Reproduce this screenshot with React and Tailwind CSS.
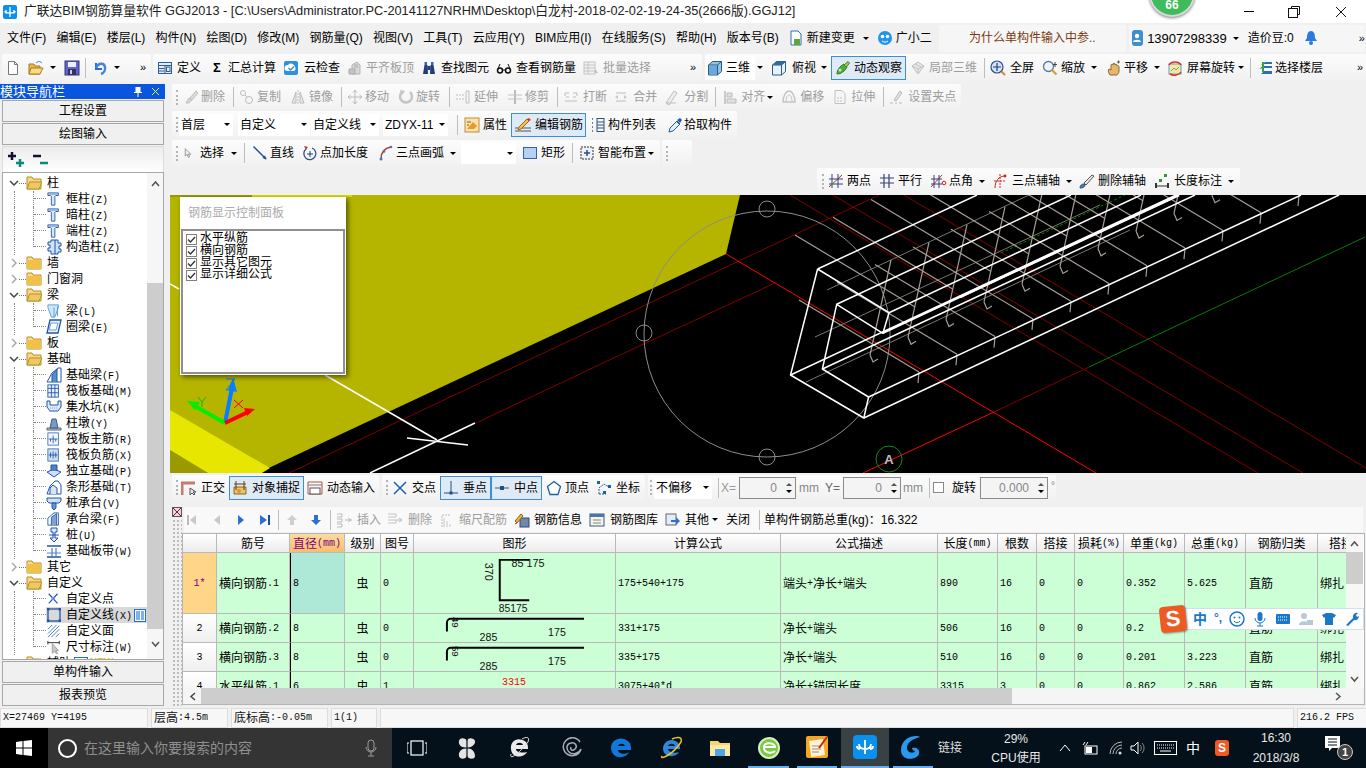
import React from "react";

const CJK = "[font-family:'Liberation_Sans','Noto_Sans_CJK_SC',sans-serif]";

const S = ({ children, w = 16, h = 16, vb = "0 0 16 16", cls = "" }) => (
  <svg width={w} height={h} viewBox={vb} className={"shrink-0 block " + cls}>{children}</svg>
);

/* toolbar icons */
const Ic = {
  doc: <S><path d="M3.5 1.5h6l3 3v10h-9z" fill="#fff" stroke="#777" /><path d="M9.5 1.5v3h3" fill="none" stroke="#777" /></S>,
  open: <S><path d="M1 4h5l1 2h5v8H1z" fill="#e8b93e" stroke="#a87b1c" /><path d="M3 8h12l-3 6H1z" fill="#f7dc85" stroke="#a87b1c" /><path d="M8 3c2-2 4-2 6 0" fill="none" stroke="#3a7bc8" /></S>,
  save: <S><rect x="1" y="1" width="14" height="14" fill="#6264c8" stroke="#33347c" /><rect x="4" y="2" width="8" height="5" fill="#eef" /><rect x="4" y="9" width="8" height="6" fill="#2f2f66" /><rect x="6" y="10" width="2" height="4" fill="#ccd" /></S>,
  undo: <S><path d="M3 3v6h6" fill="none" stroke="#2d6ec4" strokeWidth="2" /><path d="M3 8c2-5 8-6 9-1 .6 3-1 6-4 7" fill="none" stroke="#3f85da" strokeWidth="2.5" /></S>,
  define: <S><rect x="1.5" y="2.5" width="13" height="11" fill="#e4eefa" stroke="#2f5f9a" /><path d="M1.5 5.5h13M1.5 8.5h6M1.5 11h6M8 5.5v8" stroke="#2f5f9a" /><rect x="9.5" y="7" width="3.5" height="4.5" fill="none" stroke="#2f5f9a" /></S>,
  cloud: <S><rect x="1" y="1" width="14" height="14" rx="2" fill="#2f8fe0" /><path d="M4 11a3 3 0 0 1 1-6 4 4 0 0 1 7 2 2.5 2.5 0 0 1-1 4z" fill="#fff" /><path d="M5.5 8l2 2 3.5-3.5" fill="none" stroke="#2f8fe0" strokeWidth="1.4" /></S>,
  level: <S><path d="M5 14V5l5-3 3 3v9z" fill="#d8d8d8" stroke="#b4b4b4" /><path d="M2 9h6v5H2z" fill="#c4c4c4" stroke="#aaa" /><path d="M7 5h4M7 7h4" stroke="#aaa" /></S>,
  bino: <S><path d="M2 14l1.500-9h3l.5 9zM9 14l.5-9h3l1.500 9z" fill="#1e3f78" /><rect x="6.500" y="6" width="3" height="4" fill="#1e3f78" /><rect x="3.500" y="2" width="2.500" height="3" fill="#3a65a8" /><rect x="10" y="2" width="2.500" height="3" fill="#3a65a8" /></S>,
  glass: <S><circle cx="4" cy="10.500" r="2.500" fill="none" stroke="#111" strokeWidth="1.500" /><circle cx="12" cy="10.500" r="2.500" fill="none" stroke="#111" strokeWidth="1.500" /><path d="M6.500 10h3M1.500 10L4 4M14.500 10L12 4" stroke="#111" fill="none" /></S>,
  batch: <S><rect x="1" y="2" width="11" height="12" fill="#f2f2f2" stroke="#c4c4c4" /><path d="M1 5h11M1 8h11M1 11h11M5 2v12" stroke="#c4c4c4" /><path d="M12 9l3 4h-3z" fill="#bbb" /></S>,
  cube: <S><path d="M1.500 5l4-3.500h9v10l-4 3.500h-9z" fill="#8fc4ea" stroke="#2d5b86" /><path d="M1.500 5h9v10M10.500 5l4-3.500" fill="none" stroke="#2d5b86" /><path d="M2 5.500h8v9H2z" fill="#6aa9db" /></S>,
  top: <S><path d="M1.500 5l4-3.500h9v10l-4 3.500h-9z" fill="#e8f1f8" stroke="#2d5b86" /><path d="M1.500 5h9v10M10.500 5l4-3.500" fill="none" stroke="#2d5b86" /><path d="M1.500 5l4-3.500h9l-4 3.500z" fill="#2f6aa6" /></S>,
  orbit: <S><path d="M2 14c0-4 3-8 7-10l3 3c-2 4-6 7-10 7z" fill="#4cae3c" stroke="#2d7a22" /><path d="M9 5l4-3.500 1.500 1.500-3 4z" fill="#9ad24a" stroke="#587a22" /><circle cx="5" cy="10" r="1.500" fill="#cfeab0" /></S>,
  local: <S><path d="M2 6l6-4 6 4-6 8z" fill="#e8e8e8" stroke="#c0c0c0" /><path d="M2 6l6 3 6-3M8 9v5M5 4l6 3" fill="none" stroke="#c0c0c0" /></S>,
  full: <S><circle cx="7" cy="7" r="6" fill="#d4e4f6" stroke="#2a4f8c" strokeWidth="1.200" /><path d="M7 3v8M3 7h8" stroke="#1f3f80" strokeWidth="1.200" /><path d="M11.500 11.500L15 15" stroke="#d88a1a" strokeWidth="2" /></S>,
  zoom: <S><circle cx="6.500" cy="6.500" r="5" fill="#eef4fa" stroke="#5b7a9a" strokeWidth="1.300" /><path d="M10 10l4.500 4.500" stroke="#d8a12a" strokeWidth="2.200" /><path d="M13 2v5M11 4.500h4" stroke="#444" /></S>,
  pan: <S><path d="M4 15c-2-3-2-5-1-6l2 1V5c0-1 2-1 2 0V4c0-1 2-1 2 0v1c0-1 2-1 2 0v1c1-1 2 0 2 1v4c0 2-1 3-2 4z" fill="#e2b870" stroke="#8c6a2c" /><path d="M11 2h3M12.500 .5v3" stroke="#555" /></S>,
  rot: <S><rect x="2" y="4" width="12" height="10" fill="#f4e8a8" stroke="#6a9abf" /><path d="M4 11l3-3 2 2 3-3" fill="none" stroke="#69b04a" /><path d="M2 5a6.500 5 0 0 1 12 0M14 12a7 5 0 0 1-11 2" fill="none" stroke="#e03020" strokeWidth="1.500" /></S>,
  floors: <S><path d="M3 5l4-3h7v2H7L3 5zM1 9l4-3h9v2H5zM3 14l3-3h8v3z" fill="#2f6fb0" /><path d="M4 2h2v10H4z" fill="#37a33f" /></S>,
  del: <S><path d="M2 14l3-5 3 2-3 3z" fill="#d6d6d6" stroke="#c0c0c0" /><path d="M6 9l6-7 2 2-6 7z" fill="#dcdcdc" stroke="#bdbdbd" /></S>,
  copy: <S><circle cx="5" cy="4" r="2.500" fill="none" stroke="#bdbdbd" /><circle cx="11" cy="11" r="3.500" fill="none" stroke="#bdbdbd" /><path d="M7 6l2 2" stroke="#bdbdbd" /></S>,
  mirror: <S><path d="M6 3L2 14h4zM10 3l4 11h-4z" fill="#e6e6e6" stroke="#bcbcbc" /><path d="M8 1v14" stroke="#bcbcbc" strokeDasharray="2 1" /></S>,
  move: <S><path d="M8 1v14M1 8h14M8 1L6 3.500M8 1l2 2.500M8 15l-2-2.500M8 15l2-2.500M1 8l2.500-2M1 8l2.500 2M15 8l-2.500-2M15 8l-2.500 2" fill="none" stroke="#bcbcbc" /></S>,
  rotate: <S><path d="M4 3a6 6 0 1 0 8 0" fill="none" stroke="#c4c4c4" strokeWidth="2.500" /><path d="M2 1l5 1-3 4z" fill="#c4c4c4" /></S>,
  extend: <S><path d="M1 6h8M1 10h8" stroke="#c0c0c0" strokeDasharray="2 1" /><path d="M11 2v12h3V2z" fill="#f4f4f4" stroke="#c0c0c0" /></S>,
  trim: <S><path d="M8 1v14" stroke="#bbb" strokeWidth="2" /><path d="M1 6h14M1 10h14" stroke="#c4c4c4" /></S>,
  brk: <S><path d="M2 4h4M10 4h4M2 12h12M2 4v3M14 4v3" stroke="#bdbdbd" fill="none" /><path d="M6 8H3M10 8h3" stroke="#bdbdbd" /></S>,
  merge: <S><path d="M3 4h10M3 12h10" stroke="#bdbdbd" /><path d="M2 8l3-2v4zM14 8l-3-2v4z" fill="#c8c8c8" /></S>,
  split: <S><path d="M2 14l8-12 3 2-8 12zM12 14H2" fill="#eee" stroke="#bdbdbd" /></S>,
  align: <S><path d="M2 2v13" stroke="#bbb" strokeWidth="1.500" /><path d="M4 4h5v4H4zM4 10h9v4H4z" fill="#e0e0e0" stroke="#bbb" /></S>,
  offset: <S><path d="M2 13c0-6 3-11 6-11s6 5 6 11z" fill="none" stroke="#c4c4c4" strokeWidth="1.500" /><path d="M5 13c0-4 1-7 3-7s3 3 3 7" fill="none" stroke="#c4c4c4" /></S>,
  stretch: <S><path d="M3 1.500h7l3 3v10H3z" fill="#f6f6f6" stroke="#c0c0c0" /><path d="M5 9h6M5 12h6" stroke="#c0c0c0" strokeDasharray="2 1" /></S>,
  grip: <S><path d="M2 14h3M7 14h2M11 14h3" stroke="#bbb" /><path d="M6 11l6-9 2 2-6 8z" fill="#e0e0e0" stroke="#bbb" /></S>,
  attr: <S><rect x="1" y="1" width="14" height="14" fill="#f8e2b0" stroke="#c98a2e" /><path d="M3 12l6-7 4 4-3 3z" fill="#e59a2b" /><path d="M3 5h4M3 8h2" stroke="#8a5a14" /></S>,
  edit: <S w={18} vb="0 0 18 16"><path d="M1 11h16M1 14h16" stroke="#555" /><path d="M5 10l8-8 2 2-8 8-3 1z" fill="#f3c04c" stroke="#9a6a16" /><path d="M13 2l2-1 2 2-2 1z" fill="#d4352a" /></S>,
  list: <S><path d="M2 2h2M2 6h2M2 10h2M2 14h2" stroke="#3a5a80" strokeWidth="1.500" strokeDasharray="1 1" /><rect x="7" y="1.500" width="7" height="13" fill="#f4f8fc" stroke="#33526f" /><path d="M7 5h7M7 8h7M7 11h7" stroke="#33526f" /></S>,
  pick: <S><path d="M2 15l1-4 7-7 3 3-7 7z" fill="#dff0fb" stroke="#295b91" /><path d="M10 3l3-2 2 2-2 3z" fill="#1f5fae" /><path d="M9 4l3 3" stroke="#295b91" /></S>,
  sel: <S w={10}><path d="M2 1v12l3-3 2 5 2-1-2-4h4z" fill="#eef0f5" stroke="#6a6a74" /></S>,
  line: <S><path d="M1.500 1.500L14 14" stroke="#1f4f88" strokeWidth="1.500" /><path d="M14.500 14.500l-4-1.500 2.500-2.500z" fill="#1f4f88" /></S>,
  ptlen: <S><path d="M10 3a6 6 0 1 1-6 1" fill="none" stroke="#2a4f8c" strokeWidth="1.300" /><path d="M8 6v6M5 9h6" stroke="#1f3f70" /><path d="M2 1l4 1-2 3z" fill="#c23a2a" /></S>,
  arc: <S><path d="M3 14C3 7 7 3 13 2" fill="none" stroke="#b83a2a" strokeWidth="1.500" /><circle cx="3" cy="14" r="1.500" fill="#3a7ac8" /><circle cx="6" cy="6.500" r="1.300" fill="#3a7ac8" /><circle cx="13" cy="2" r="1.300" fill="#3a7ac8" /></S>,
  rect: <S><rect x="1.500" y="2.500" width="13" height="11" fill="#b5d0f2" stroke="#3162ac" /></S>,
  smart: <S><rect x="2" y="2" width="12" height="12" fill="#eef2f8" stroke="#333" strokeDasharray="2 1" /><path d="M8 5v6M5 8h6" stroke="#2a4f8c" strokeWidth="1.500" /></S>,
  two: <S><path d="M1 14L14 2" stroke="#c8241c" /><path d="M4 1v14M10 1v14M1 6h14M1 11h14" stroke="#33427c" /><circle cx="4" cy="11" r="1.300" fill="#2e9c3a" /></S>,
  para: <S><path d="M5 1v14M10 1v14M1 5h14M1 10h14" stroke="#33427c" strokeWidth="1.200" /></S>,
  angle: <S w={17} vb="0 0 17 16"><path d="M1 14L12 2" stroke="#c8241c" /><path d="M4 2v13M9 2v13M1 6h11M1 11h11" stroke="#33427c" /><circle cx="14" cy="10" r="1.800" fill="none" stroke="#c8241c" /></S>,
  arcAx: <S><path d="M3 15C3 8 7 3 13 3" fill="none" stroke="#c8241c" /><path d="M8 1v14M2 8h12" stroke="#c8241c" strokeDasharray="2 1" /><circle cx="13" cy="3" r="1.400" fill="#c8241c" /></S>,
  brush: <S><path d="M1 15c0-3 2-4 4-4l1 1c0 2-2 3-5 3z" fill="#4a7ab0" stroke="#2f5280" /><path d="M5 10l8-8 2 1-8 9z" fill="#e9e9e9" stroke="#555" /></S>,
  dim: <S><rect x="1" y="10" width="2" height="5" fill="#333" /><rect x="13" y="10" width="2" height="5" fill="#333" /><path d="M2 13h12" stroke="#333" /><rect x="10" y="1" width="3" height="3" fill="#2a9a3c" /><rect x="5" y="6" width="3" height="3" fill="#2a9a3c" /></S>,
  ortho: <S><path d="M1 15V3h13" fill="none" stroke="#c77a70" strokeWidth="3" /><path d="M9 8v7l2-2 2 2 1-1-2-2h3z" fill="#e8e8f0" stroke="#555" /></S>,
  snap: <S><path d="M2 7h12v7H2z" fill="#e8c472" stroke="#8a6416" /><path d="M4 1v9M12 1v9M2 4h12" stroke="#6a3a12" /><circle cx="7" cy="11" r="2" fill="#d89a2c" /></S>,
  dyn: <S><path d="M1 2h14M1 14h14M1 2v12M15 2v12" stroke="#b5544a" fill="none" /><rect x="3" y="8" width="10" height="6" fill="#fff" stroke="#555" /><path d="M1 5h14" stroke="#777" /></S>,
  cross: <S><path d="M2 2l12 12M14 2L2 14" stroke="#1f5fae" strokeWidth="1.500" /></S>,
  perp: <S><path d="M1 13h14" stroke="#1f4f88" /><path d="M8 1v12" stroke="#1f4f88" /><rect x="6.500" y="11.500" width="3" height="3" fill="#1f4f88" /></S>,
  mid: <S><path d="M1 8h14" stroke="#555" /><rect x="6" y="6" width="4" height="4" fill="#1f4f88" /></S>,
  vertex: <S><path d="M8 1.500l6.500 5-2.500 8H4l-2.500-8z" fill="#fff" stroke="#1f5fae" strokeWidth="1.300" /></S>,
  coord: <S><path d="M3 14V8l5-4 5 3M3 14h7" fill="none" stroke="#1f5fae" strokeDasharray="2 1" /><rect x="1" y="1" width="3" height="3" fill="#1f5fae" /><rect x="12" y="5" width="3" height="3" fill="#1f5fae" /><rect x="7" y="11" width="3" height="3" fill="#1f5fae" /></S>,
  ins: <S w={17} vb="0 0 17 16"><path d="M1 2h5v3H1M1 7h5v3H1M1 12h5v3H1" fill="none" stroke="#bbb" /><path d="M9 8h7M12 6l3 2-3 2" fill="none" stroke="#bbb" /></S>,
  rem: <S><path d="M1 2h8v3H1M1 8h8v3H1" fill="none" stroke="#c4c4c4" /><path d="M9 8h6M12 6l3 2-3 2" fill="none" stroke="#bbb" /></S>,
  scale: <S w={12} vb="0 0 12 16"><path d="M1 15V3M1 3h9" fill="none" stroke="#bbb" strokeDasharray="2 1" /><path d="M3 15V6M6 15V9M9 15v-3" stroke="#c6c6c6" /></S>,
  info: <S><rect x="6" y="6" width="9" height="9" fill="#6e89ac" stroke="#2e4b70" /><path d="M1 9l6-7 2 2-6 7z" fill="#e9b64a" stroke="#8a6416" /><path d="M1 12l2-1" stroke="#d23" /></S>,
  lib: <S><rect x="1" y="2" width="14" height="12" fill="#f4f4ea" stroke="#3a5a80" /><rect x="1" y="2" width="14" height="3" fill="#4d76a8" /><path d="M4 8h8M4 11h8" stroke="#8a8a6c" /></S>,
  other: <S><rect x="1" y="2" width="10" height="11" fill="#e4ecf6" stroke="#667" /><path d="M6 8h5V5l4 4-4 4v-3H6z" fill="#2f6fd0" /></S>,
};

const Arrow = ({ cls = "" }) => (
  <span className={"block w-0 h-0 shrink-0 border-x-[3px] border-x-transparent border-t-[3px] border-t-black " + cls} />
);
const Sep = ({ cls = "mx-[6px]" }) => <span className={"block w-px h-[20px] bg-[#bdbdbd] shrink-0 " + cls} />;
const Grip = ({ cls = "mx-[3px]" }) => <span className={"block w-[2px] h-[15px] border-l-2 border-dotted border-[#b4b4b4] shrink-0 " + cls} />;

const T = ({ i, t, g, cls = "mr-[8px]", gap = "gap-[5px]" }) => (
  <div className={"flex items-center shrink-0 whitespace-nowrap " + gap + " " + (g ? "text-[#9d9d9d] " : "text-black ") + cls}>
    {i}
    {t && <span>{t}</span>}
  </div>
);

const Bar = ({ children, cls = "" }) => (
  <div className={"flex items-center rounded-[2px] bg-linear-to-b from-[#fcfcfc] to-[#f1f1f1] " + cls}>{children}</div>
);

const Sel = ({ t, w }) => (
  <div className={"h-[22px] bg-white flex items-center justify-between pl-[2px] pr-[3px] whitespace-nowrap overflow-hidden shrink-0 " + w}>
    <span>{t}</span>
    <Arrow />
  </div>
);

const Box = ({ children, cls = "" }) => (
  <div className={"h-[24px] flex items-center border border-[#3b8fd8] bg-[#deebf6] shrink-0 " + cls}>{children}</div>
);

const Spin = ({ v, w }) => (
  <div className={"h-[22px] border border-[#8a8a8a] bg-[#f4f4f4] flex items-center justify-end shrink-0 " + w}>
    <span className="text-[#888] mr-[9px]">{v}</span>
    <span className="flex flex-col gap-[4px] mr-[3px] items-center">
      <span className="block w-0 h-0 border-x-[3px] border-x-transparent border-b-[3px] border-b-[#555]" />
      <Arrow />
    </span>
  </div>
);

/* mixed text: Latin in the narrow fixed pitch of the grid font */
const Mx = ({ t }) => (
  <>
    {t.split(/([\x00-\x7f]+)/).map((p, k) =>
      /^[\x00-\x7f]+$/.test(p) ? (
        <span key={k} className="text-[10px] [font-family:'Liberation_Mono',monospace]">{p}</span>
      ) : (
        <span key={k}>{p}</span>
      )
    )}
  </>
);

/* tree icons */
const tc = "#1f56a8";
const Tc = {
  col: <S w={14}><path d="M1 1h12v3h-3l-1 1v10H5V5L4 4H1z" fill="#d5e7f8" stroke={tc} /><path d="M1 2.500h12" stroke="#6b9cd8" /></S>,
  gear: <S><path d="M5 1h7v3h3v3h-2v3h2v3h-3v2H5v-3H2V9h2V6H2V3h3z" fill="#cfe2f6" stroke={tc} /><path d="M9 1v14" stroke={tc} /></S>,
  beam: <S w={14}><path d="M1 1h12v3L9 15H5L1 4z" fill="#cfe6fa" stroke="#4d97d8" /><path d="M8 15V4M12 3v11" stroke="#4d97d8" /></S>,
  ring: <S><path d="M4 1h11l-3 13H1z" fill="#eaf3fb" stroke={tc} strokeWidth="1.300" /><path d="M5 4h7l-2 7H3z" fill="#fff" stroke="#6b9cd8" /></S>,
  fb: <S><path d="M1 15l5-9 6-5h3v14z" fill="#fff" stroke={tc} /><path d="M6 15V8l5-6v13" fill="#5a8ccc" stroke={tc} /></S>,
  raft: <S w={14}><rect x="1" y="1" width="12" height="14" fill="#e8f1fb" stroke={tc} /><path d="M1 5h12M1 10h12M5 1v14M9 1v14" stroke={tc} /></S>,
  pit: <S><path d="M1 2h3v4h8V2h3v6l-3 4H4L1 8z" fill="#dfe9f6" stroke={tc} /><path d="M4 9h8M3 12h10" stroke="#8aa8cf" strokeDasharray="1 1" /></S>,
  pier: <S><path d="M1 13h14v2H1z" fill="#b9cbe2" stroke="#567" /><path d="M6 4h4l2 9H4z" fill="#7a98c2" stroke="#3a5a8a" /></S>,
  rp: <S w={14}><rect x="1" y="1" width="12" height="14" fill="#f5f9ff" stroke="#3a71b8" /><path d="M2 8h10M7 4v9M4 8v3M10 8v3" stroke="#1f56a8" /></S>,
  rn: <S w={14}><rect x="1" y="1" width="12" height="14" fill="#cddff2" stroke="#3a71b8" /><path d="M2 8h10M7 4v8M4 5v6M10 5v6" stroke="#1f56a8" /></S>,
  ind: <S><path d="M1 9l7-3 7 3-7 5z" fill="#cfe0f4" stroke={tc} /><path d="M5 8V2h6v6" fill="#4f7fbe" stroke={tc} /></S>,
  strip: <S><path d="M1 15l3-8 5-5h3l3 4v9z" fill="#fff" stroke={tc} /><path d="M4 15V9l3-3 4 3v6" fill="#d7e5f5" stroke={tc} /></S>,
  cap: <S><path d="M1 3h14v3l-2 2H3L1 6z" fill="#cfe0f4" stroke={tc} /><path d="M6 8h4v5l-2 2-2-2z" fill="#6f95ca" stroke={tc} /></S>,
  cb: <S w={14}><path d="M1 15V7l7-6h5v14z" fill="#fff" stroke={tc} /><path d="M5 15V6l6-4v13" fill="#7fa2d4" stroke={tc} /></S>,
  pile: <S><path d="M5 1h6v4H9v6h3l-4 4-4-4h3V5H5z" fill="#dbe8f7" stroke={tc} /><path d="M3 8h10" stroke={tc} /></S>,
  band: <S><path d="M1 3h14M1 14h14" stroke={tc} strokeWidth="1.500" /><rect x="5" y="5" width="2" height="8" fill="#8fb0dc" /><rect x="9" y="5" width="2" height="8" fill="#8fb0dc" /><path d="M1 10h14" stroke="#5d87c4" /></S>,
  pt: <S w={14}><path d="M2 2l10 11M12 2L2 13" stroke={tc} strokeWidth="1.300" /><circle cx="7" cy="7.500" r="2" fill="#5d97e0" /></S>,
  ln: <S><rect x="2" y="2" width="12" height="12" fill="none" stroke={tc} strokeWidth="1.300" /><rect x="1" y="1" width="2.500" height="2.500" fill={tc} /><rect x="12.500" y="1" width="2.500" height="2.500" fill={tc} /><rect x="1" y="12.500" width="2.500" height="2.500" fill={tc} /><rect x="12.500" y="12.500" width="2.500" height="2.500" fill={tc} /></S>,
  ht: <S w={14}><path d="M1 6L6 1M1 11L11 1M1 15L14 2M5 15L14 6M10 15l4-4" stroke="#3972c4" /></S>,
  dm: <S w={14}><path d="M1 3h13M1 1v4M14 1v4" stroke="#222" /><path d="M6 4v11l3-2 2 3 1-1-2-3h3z" fill="#c8c8c8" stroke="#999" /></S>,
};

const Folder = ({ open }) => (
  <S>
    <path d="M1 2h5l1 2h8v10H1z" fill={open ? "#f3d782" : "#f7dd8c"} stroke="#b98f2e" />
    {open ? <path d="M3.500 7H16l-3 7H1z" fill="#f0c860" stroke="#b98f2e" /> : <path d="M1 5h14v9H1z" fill="#f0c048" />}
  </S>
);
const Chev = ({ open }) => (
  <S w={10} h={10} vb="0 0 10 10">
    {open ? <path d="M1 3l4 4 4-4" fill="none" stroke="#444" strokeWidth="1.500" /> : <path d="M3 1l4 4-4 4" fill="none" stroke="#aaa" strokeWidth="1.500" />}
  </S>
);

const TreeF = ({ t, open, children }) => (
  <div className="h-[16px] flex items-center shrink-0">
    <span className="w-[6px] shrink-0" />
    <Chev open={open} />
    <span className="w-[7px] border-t border-dotted border-[#777] shrink-0" />
    <Folder open={open} />
    <span className="ml-[5px]">{t}</span>
    {children}
  </div>
);
const TreeC = ({ i, t, last, sel }) => (
  <div className="h-[16px] flex items-stretch shrink-0">
    <span className="w-[12px] border-r border-dotted border-[#888] shrink-0" />
    <span className={"w-[19px] shrink-0 border-r border-dotted border-[#888] " + (last ? "h-[8px]" : "")} />
    <span className="w-[12px] h-[8px] border-b border-dotted border-[#888] shrink-0" />
    <div className={"flex items-center grow min-w-0 " + (sel ? "bg-[#d9d9d9]" : "")}>
      <span className="w-[15px] flex justify-center shrink-0">{i}</span>
      <span className="ml-[5px] whitespace-nowrap"><Mx t={t} /></span>
      {sel && <span className="ml-[2px] w-[12px] h-[13px] border border-[#1f6fd0] bg-white flex shrink-0 gap-px p-px"><span className="block w-[4px] h-full bg-[#7fb0e8]" /><span className="block w-[4px] h-full bg-[#7fb0e8]" /></span>}
    </div>
  </div>
);

const NavBtn = ({ t, cls = "" }) => (
  <div className={"h-[22px] mx-[1px] border border-[#a8a8a8] bg-[#f0f0f0] flex items-center justify-center shrink-0 " + cls}>{t}</div>
);

/* scene */
const Scene = () => {
  const hoops = [];
  for (let i = 0; i < 13; i++) {
    const x = 919 + 38 * i, y = 372 - 17.7 * i;
    hoops.push(
      <g key={i}>
        <path d={`M${x} ${y}l-1 11M${x} ${y}l-120 -72M${x - 4} ${y - 65}l-120 -72`} />
        <path d={`M${x - 49} ${y - 17}l21 -95M${x - 49} ${y - 17}l3 7l5 -3`} />
      </g>
    );
  }
  return (
    <svg viewBox="170 195 1196 278" className="block w-[1196px] h-[278px]">
      <rect x="170" y="195" width="1196" height="278" fill="#000" />
      <polygon points="170,195 740,195 726,254 258,473 170,473" fill="#b5b500" />
      <polygon points="170,410 270,468 262,473 208,473 170,450" fill="#e6e600" />
      <polygon points="170,450 208,473 170,473" fill="#9a9a00" />
      <rect x="170" y="195" width="82" height="2" fill="#9a9a00" />
      <rect x="252" y="195" width="100" height="2" fill="#dcdc00" />
      <g stroke="#800000" fill="none" strokeWidth="1">
        <path d="M289 473L620 317 879 195" />
        <path d="M476 423L620 355 775 283" />
        <path d="M904 195L1366 468" />
        <path d="M833 195L1303 473" />
        <path d="M790 195L1258 473" />
        <path d="M994 412L1089 367" />
      </g>
      <path d="M726 254L1096 473M863 473L994 412" stroke="#ff0000" fill="none" />
      <path d="M1089 367L1365 237" stroke="#008000" fill="none" />
      <path d="M1001 253L1125 195" stroke="#007a00" strokeDasharray="3 2" fill="none" />
      <path d="M179 289L170 284M325 375L437 440" stroke="#fff" strokeWidth="1.500" fill="none" />
      <path d="M407 438L468 445M475 423L370 473" stroke="#fff" strokeWidth="1.500" fill="none" />
      <circle cx="767" cy="334" r="123" fill="none" stroke="#8c8c8c" />
      <circle cx="767" cy="209" r="8" fill="none" stroke="#8c8c8c" />
      <circle cx="644" cy="333" r="8" fill="none" stroke="#8c8c8c" />
      <circle cx="767" cy="457" r="8" fill="none" stroke="#8c8c8c" />
      <path d="M827 290L1029 195M815 337L1100 205M806 382L1130 230" stroke="#7a7570" fill="none" />
      <g stroke="#a89e98" strokeWidth="1.200" fill="none">{hoops}</g>
      <g stroke="#fff" strokeWidth="1.500" fill="none" strokeLinejoin="round">
        <path d="M817.600 269L790.500 375 863.800 418 868.600 397 822.400 369 836.700 304.300 882.900 333.300 889 312.700 817.600 269" />
        <path d="M817.600 269L977 195M836.700 304.300L1071 195M889 312.700L1141 195M882.900 333.300L1179 195M790.500 375L1176 195M822.400 369L1195 195M868.600 397L1301 195M863.800 418L1339 195" />
      </g>
      <path d="M960 297L1179 195" stroke="#fff" strokeWidth="2.500" fill="none" />
      <circle cx="889" cy="459" r="13" fill="none" stroke="#0d8a1e" />
      <text x="889" y="464" textAnchor="middle" fontSize="13" fontWeight="700" fill="#bdbdbd" fontFamily="Liberation Sans">A</text>
      <path d="M225 423L233 383" stroke="#0a7cff" strokeWidth="4" />
      <path d="M233 378l4 14-9-2z" fill="#0a7cff" />
      <path d="M225 423L193 405" stroke="#00f000" strokeWidth="4" />
      <path d="M187 401l13 1-5 8z" fill="#00f000" />
      <path d="M225 423L248 412" stroke="#ff0000" strokeWidth="4" />
      <path d="M255 409l-11-1 3 8z" fill="#ff0000" />
      <path d="M226 379h9l-9 11h9" stroke="#0a7cff" fill="none" />
      <path d="M198 397l4 5v5M206 397l-4 5" stroke="#00c000" fill="none" />
      <path d="M234 400l9 8M243 400l-9 8" stroke="#ff0000" fill="none" />
    </svg>
  );
};

const Check = () => (
  <span className="w-[11px] h-[11px] border border-[#808080] bg-white flex items-center justify-center shrink-0">
    <S w={9} h={9} vb="0 0 9 9"><path d="M1 4.500l2.500 2.500L8 2" fill="none" stroke="#333" strokeWidth="1.300" /></S>
  </span>
);

const Rebar = ({ a }) => (
  <svg viewBox="0 0 202 29" className="block w-full h-full">
    <path d="M31 18V9a4 4 0 0 1 4-4h138" fill="none" stroke="#000" strokeWidth="2" />
    <text transform="translate(36 3) rotate(90)" fontSize="10" fontFamily="Liberation Sans" fill="#111">{a}</text>
    <text x="74" y="28" textAnchor="middle" fontSize="11" fontFamily="Liberation Sans" fill="#111">285</text>
    <text x="145" y="23" textAnchor="middle" fontSize="11" fontFamily="Liberation Sans" fill="#111">175</text>
  </svg>
);

const cols = "grid grid-cols-[34px_73px_55px_36px_33px_202px_165px_157px_60px_39px_38px_49px_61px_61px_72px_28px] ";
const cell = "border-r border-b border-[#b9b9b9] flex items-center overflow-hidden whitespace-nowrap pl-[2px] pt-[2px] bg-[#ccffd6]";

const Row = ({ n, h, d, shape, f, desc, len, cnt, a, b, first }) => (
  <div className={cols + h}>
    <div className={"border-r border-b border-[#b9b9b9] flex items-center justify-center pt-[2px] " + (first ? "bg-[#ffd588] text-[#800080]" : "bg-linear-to-b from-white to-[#efefef]")}><Mx t={n} /></div>
    <div className={cell}><Mx t={f[0]} /></div>
    <div className={cell + (first ? " !bg-[#aee8d6]" : "") + " border-l border-l-black"}><Mx t={d} /></div>
    <div className={cell + " justify-center !pl-0"}>虫</div>
    <div className={cell}><Mx t={f[1]} /></div>
    <div className={cell + " !pl-0 !pt-0"}>{shape}</div>
    <div className={cell}><Mx t={f[2]} /></div>
    <div className={cell}><Mx t={desc} /></div>
    <div className={cell}><Mx t={len} /></div>
    <div className={cell}><Mx t={cnt} /></div>
    <div className={cell}><Mx t="0" /></div>
    <div className={cell}><Mx t="0" /></div>
    <div className={cell}><Mx t={a} /></div>
    <div className={cell}><Mx t={b} /></div>
    <div className={cell + " !pl-[3px]"}>直筋</div>
    <div className={cell + " !border-r-0"}>绑扎</div>
  </div>
);

const Head = ({ t, cls = "justify-center" }) => (
  <div className={"border-r border-b border-[#b9b9b9] flex items-center overflow-hidden whitespace-nowrap pt-[2px] bg-linear-to-b from-white to-[#ececec] " + cls}><Mx t={t} /></div>
);

const Win = () => (
  <svg width="18" height="18" viewBox="0 0 18 18" className="block"><path d="M1 3l6.500-1v6.500H1zM8.500 2L17 1v7.500H8.500zM1 9.500h6.500V16L1 15zM8.500 9.500H17V17l-8.500-1z" fill="#fff" /></svg>
);

const Tk = ({ children, cls = "w-[49px]", on = "" }) => (
  <div className={"h-full flex flex-col shrink-0 " + cls}>
    <div className="grow flex items-center justify-center">{children}</div>
    {on && <div className={"h-[2px] bg-[#66aef0] " + on} />}
  </div>
);

export default function App() {
  return (
    <div className={"relative w-[1366px] h-[768px] overflow-hidden flex flex-col bg-[#f0f0f0] text-[12px] leading-none text-black " + CJK}>
      {/* title */}
      <div className="h-[23px] bg-white flex items-center shrink-0 text-[12.75px] text-[#222]">
        <div className="w-[14px] h-[14px] ml-[3px] rounded-[2px] bg-[#0a90ee] flex items-center justify-center">
          <S w={12} h={12} vb="0 0 12 12"><path d="M6 1v10M2 4c0 3 1 3 4 3s4 0 4-3M3 7c-2 0-2-1-2-2M9 7c2 0 2-1 2-2" fill="none" stroke="#fff" strokeWidth="1.300" /></S>
        </div>
        <span className="ml-[7px] whitespace-nowrap">广联达BIM钢筋算量软件 GGJ2013 - [C:\Users\Administrator.PC-20141127NRHM\Desktop\白龙村-2018-02-02-19-24-35(2666版).GGJ12]</span>
        <div className="ml-auto flex items-center">
          <span className="block w-[10px] h-px bg-black mr-[34px]" />
          <S w={12} h={12} vb="0 0 12 12" cls="mr-[35px]"><path d="M3.500 2.500V.5h8v8h-2" fill="none" stroke="#111" /><rect x=".5" y="2.500" width="9" height="9" fill="#fff" stroke="#111" /></S>
          <S w={12} h={12} vb="0 0 12 12" cls="mr-[19px]"><path d="M1 1l10 10M11 1L1 11" stroke="#111" /></S>
        </div>
      </div>

      {/* menu */}
      <div className="h-[30px] flex items-center shrink-0 pl-[7px] whitespace-nowrap">
        <div className="flex gap-[10.2px]">
          {["文件(F)", "编辑(E)", "楼层(L)", "构件(N)", "绘图(D)", "修改(M)", "钢筋量(Q)", "视图(V)", "工具(T)", "云应用(Y)", "BIM应用(I)", "在线服务(S)", "帮助(H)", "版本号(B)"].map((m) => <span key={m}>{m}</span>)}
        </div>
        <S cls="ml-[9px]"><path d="M3 1h7l3 3v11H3z" fill="#fff" stroke="#2a6fc0" /><path d="M6 9h6v6H6z" fill="#5aa83a" /></S>
        <span className="ml-[3px]">新建变更</span>
        <Arrow cls="ml-[8px]" />
        <S cls="ml-[8px]"><circle cx="8" cy="8" r="7" fill="#1f96e8" /><circle cx="5.500" cy="6.500" r="1.800" fill="#fff" /><circle cx="10.500" cy="6.500" r="1.800" fill="#fff" /><path d="M5 11c2 1.500 4 1.500 6 0" stroke="#fff" fill="none" /></S>
        <span className="ml-[3px]">广小二</span>
        <div className="ml-[7px] w-[187px] h-[27px] bg-[#f6f6f6] rounded-[2px] flex items-center justify-center text-[#7a3a10]">为什么单构件输入中参..</div>
        <div className="ml-[3px] w-[236px] h-[27px] bg-[#f6f6f6] rounded-[2px] flex items-center">
          <div className="ml-[3px] w-[16px] h-[16px] rounded-[3px] bg-[#3f8fd0] flex items-center justify-center">
            <S w={10} h={10} vb="0 0 10 10"><circle cx="5" cy="3" r="2.200" fill="#fff" /><path d="M1 9c0-3 8-3 8 0z" fill="#fff" /></S>
          </div>
          <span className="ml-[4px] text-[13px]">13907298339</span>
          <Arrow cls="ml-[6px]" />
          <span className="ml-[9px]">造价豆:0</span>
          <S cls="ml-[9px]"><path d="M8 1c3 0 4 3 4 7l2 3H2l2-3c0-4 1-7 4-7z" fill="#2a7be0" /><circle cx="8" cy="13" r="2" fill="#2a7be0" /></S>
          <span className="ml-[40px] text-[11px]">»</span>
        </div>
      </div>

      {/* toolbar 1 */}
      <div className="h-[27px] mt-[1px] flex items-stretch shrink-0">
        <Bar cls="ml-[2px] w-[149px] pl-[3px]">
          {Ic.doc}<span className="w-[7px] shrink-0" />{Ic.open}<span className="w-[6px] shrink-0" /><Arrow /><span className="w-[8px] shrink-0" />{Ic.save}<Sep cls="ml-[5px] mr-[7px]" />{Ic.undo}<Arrow cls="ml-[5px]" /><span className="ml-[20px] text-[11px]">»</span>
        </Bar>
        <Bar cls="ml-[2px] w-[549px] pl-[4px]">
          <T i={Ic.define} t="定义" cls="mr-[9px]" gap="gap-[4px]" />
          <T i={<span className="w-[14px] text-[13px] font-bold text-center">Σ</span>} t="汇总计算" cls="mr-[7px]" gap="gap-[4px]" />
          <T i={Ic.cloud} t="云检查" cls="mr-[7px]" />
          <T i={Ic.level} t="平齐板顶" g cls="mr-[7px]" gap="gap-[3px]" />
          <T i={Ic.bino} t="查找图元" cls="mr-[7px]" gap="gap-[4px]" />
          <T i={Ic.glass} t="查看钢筋量" cls="mr-[7px]" gap="gap-[4px]" />
          <T i={Ic.batch} t="批量选择" g gap="gap-[4px]" />
          <span className="ml-auto mr-[6px] text-[11px]">»</span>
        </Bar>
        <Bar cls="ml-[3px] grow">
          <div className="h-[24px] w-[50px] bg-white flex items-center gap-[3px] pl-[2px] shrink-0">{Ic.cube}<span>三维</span></div>
          <Arrow cls="ml-[2px] mr-[8px]" />
          <T i={Ic.top} t="俯视" cls="mr-[5px]" />
          <Arrow cls="mr-[4px]" />
          <Box cls="w-[75px] pl-[3px] gap-[3px]">{Ic.orbit}<span>动态观察</span></Box>
          <T i={Ic.local} t="局部三维" g cls="ml-[4px] mr-[7px]" gap="gap-[3px]" />
          <Sep cls="mr-[5px]" />
          <T i={Ic.full} t="全屏" gap="gap-[4px]" />
          <T i={Ic.zoom} t="缩放" cls="mr-[6px]" gap="gap-[3px]" />
          <Arrow cls="mr-[9px]" />
          <T i={Ic.pan} t="平移" cls="mr-[6px]" gap="gap-[2px]" />
          <Arrow cls="mr-[7px]" />
          <T i={Ic.rot} t="屏幕旋转" cls="mr-[3px]" gap="gap-[4px]" />
          <Arrow />
          <Sep cls="ml-[6px] mr-[7px]" />
          <T i={Ic.floors} t="选择楼层" gap="gap-[1px]" />
          <span className="ml-auto mr-[3px] text-[11px]">»</span>
        </Bar>
      </div>

      {/* main */}
      <div className="flex mt-[3px] h-[624px] shrink-0">
        {/* left nav */}
        <div className="w-[170px] shrink-0 flex flex-col pl-[1px] pr-[5px]">
          <div className="h-[15px] -ml-[1px] w-[165px] bg-[#0a55dd] text-white text-[13px] flex items-center shrink-0">
            <span>模块导航栏</span>
            <S w={10} h={11} vb="0 0 10 11" cls="ml-auto"><path d="M2.500 1h5v5H9v1H5.500v4h-1V7H1V6h1.500z" fill="#fff" /></S>
            <S w={9} h={9} vb="0 0 9 9" cls="ml-[8px] mr-[5px]"><path d="M1 1l7 7M8 1L1 8" stroke="#cfe0ff" /></S>
          </div>
          <NavBtn t="工程设置" cls="mt-[1px]" />
          <NavBtn t="绘图输入" cls="mt-px" />
          <div className="h-[26px] mx-px mt-[1px] bg-linear-to-b from-[#ececec] to-white border-x border-t border-[#ddd] flex items-center pl-[5px] gap-[7px] shrink-0">
            <S w={17} h={17} vb="0 0 17 17"><path d="M4 1v8M0 5h8" stroke="#113" strokeWidth="2.500" /><path d="M12 8v8M8 12h8" stroke="#0a8a7a" strokeWidth="2.500" /></S>
            <S w={17} h={17} vb="0 0 17 17"><path d="M1 5h8" stroke="#113" strokeWidth="2.500" /><path d="M8 12h8" stroke="#0a8a7a" strokeWidth="2.500" /></S>
          </div>
          <div className="h-[488px] mx-px border border-[#a8a8a8] bg-white flex overflow-hidden shrink-0">
            <div className="grow min-w-0 overflow-hidden flex flex-col pt-[2px]">
              <TreeF t="柱" open />
              <TreeC i={Tc.col} t="框柱(Z)" />
              <TreeC i={Tc.col} t="暗柱(Z)" />
              <TreeC i={Tc.col} t="端柱(Z)" />
              <TreeC i={Tc.gear} t="构造柱(Z)" last />
              <TreeF t="墙" />
              <TreeF t="门窗洞" />
              <TreeF t="梁" open />
              <TreeC i={Tc.beam} t="梁(L)" />
              <TreeC i={Tc.ring} t="圈梁(E)" last />
              <TreeF t="板" />
              <TreeF t="基础" open />
              <TreeC i={Tc.fb} t="基础梁(F)" />
              <TreeC i={Tc.raft} t="筏板基础(M)" />
              <TreeC i={Tc.pit} t="集水坑(K)" />
              <TreeC i={Tc.pier} t="柱墩(Y)" />
              <TreeC i={Tc.rp} t="筏板主筋(R)" />
              <TreeC i={Tc.rn} t="筏板负筋(X)" />
              <TreeC i={Tc.ind} t="独立基础(P)" />
              <TreeC i={Tc.strip} t="条形基础(T)" />
              <TreeC i={Tc.cap} t="桩承台(V)" />
              <TreeC i={Tc.cb} t="承台梁(F)" />
              <TreeC i={Tc.pile} t="桩(U)" />
              <TreeC i={Tc.band} t="基础板带(W)" last />
              <TreeF t="其它" />
              <TreeF t="自定义" open />
              <TreeC i={Tc.pt} t="自定义点" />
              <TreeC i={Tc.ln} t="自定义线(X)" sel />
              <TreeC i={Tc.ht} t="自定义面" />
              <TreeC i={Tc.dm} t="尺寸标注(W)" last />
              <TreeF t="辅助">
                <span className="ml-[3px] w-[14px] h-[12px] border border-[#1f6fd0] shrink-0" />
                <span className="ml-[2px] text-[#e8c400] font-bold text-[10px]">NEW</span>
              </TreeF>
            </div>
            <div className="w-[16px] shrink-0 flex flex-col items-stretch bg-[#f6f6f6]">
              <div className="h-[20px] flex items-center justify-center shrink-0"><S w={9} h={7} vb="0 0 9 7"><path d="M1 6l3.500-4L8 6" fill="none" stroke="#555" strokeWidth="1.500" /></S></div>
              <div className="h-[90px] shrink-0" />
              <div className="h-[346px] bg-[#cdcdcd] shrink-0" />
              <div className="grow flex items-center justify-center"><S w={9} h={7} vb="0 0 9 7"><path d="M1 1l3.500 4L8 1" fill="none" stroke="#555" strokeWidth="1.500" /></S></div>
            </div>
          </div>
          <NavBtn t="单构件输入" cls="mt-[1px]" />
          <NavBtn t="报表预览" cls="mt-px" />
        </div>

        {/* right */}
        <div className="w-[1196px] shrink-0 flex flex-col">
          <Bar cls="h-[26px] ml-[2px] w-[789px] shrink-0 pl-[1px]">
            <Grip />
            <span className="w-[3px] shrink-0" />
            <T i={Ic.del} t="删除" g cls="" gap="gap-[1px]" /><Sep cls="ml-[8px] mr-[4px]" />
            <T i={Ic.copy} t="复制" g cls="mr-[9px]" gap="gap-[3px]" />
            <T i={Ic.mirror} t="镜像" g cls="" gap="gap-[3px]" /><Sep cls="ml-[8px] mr-[5px]" />
            <T i={Ic.move} t="移动" g cls="mr-[9px]" gap="gap-[2px]" />
            <T i={Ic.rotate} t="旋转" g cls="" gap="gap-[2px]" /><Sep cls="ml-[9px] mr-[5px]" />
            <T i={Ic.extend} t="延伸" g cls="mr-[9px]" gap="gap-[3px]" />
            <T i={Ic.trim} t="修剪" g cls="" gap="gap-[2px]" /><Sep cls="ml-[8px] mr-[5px]" />
            <T i={Ic.brk} t="打断" g cls="mr-[6px]" gap="gap-[4px]" />
            <T i={Ic.merge} t="合并" g cls="mr-[7px]" gap="gap-[4px]" />
            <T i={Ic.split} t="分割" g cls="" gap="gap-[4px]" /><Sep cls="ml-[7px] mr-[7px]" />
            <T i={Ic.align} t="对齐" g cls="mr-[2px]" gap="gap-[2px]" /><Arrow cls="border-t-[#999] mr-[8px]" />
            <T i={Ic.offset} t="偏移" g cls="mr-[8px]" gap="gap-[3px]" />
            <T i={Ic.stretch} t="拉伸" g cls="" gap="gap-[3px]" /><Sep cls="ml-[8px] mr-[4px]" />
            <T i={Ic.grip} t="设置夹点" g cls="" gap="gap-[4px]" />
          </Bar>
          <Bar cls="h-[27px] ml-[2px] mt-[1px] w-[565px] shrink-0 pl-[1px]">
            <Grip cls="ml-[3px] mr-[1px]" />
            <Sel t="首层" w="w-[54px]" />
            <span className="w-[5px] shrink-0" />
            <Sel t="自定义" w="w-[72px]" />
            <span className="w-[1px] shrink-0" />
            <Sel t="自定义线" w="w-[68px]" />
            <span className="w-[4px] shrink-0" />
            <Sel t="ZDYX-11" w="w-[65px]" />
            <Sep cls="ml-[9px] mr-[6px]" />
            <T i={Ic.attr} t="属性" cls="mr-[4px]" gap="gap-[3px]" />
            <Box cls="w-[75px] pl-[2px] gap-[3px]">{Ic.edit}<span>编辑钢筋</span></Box>
            <T i={Ic.list} t="构件列表" cls="ml-[4px] mr-[11px]" gap="gap-[2px]" />
            <T i={Ic.pick} t="拾取构件" cls="" gap="gap-[1px]" />
          </Bar>
          <div className="h-[26px] mt-[2px] flex shrink-0">
            <Bar cls="ml-[2px] w-[488px] pl-[1px]">
              <Grip />
              <span className="w-[3px] shrink-0" />
              <T i={Ic.sel} t="选择" cls="mr-[7px]" gap="gap-[6px]" />
              <Arrow />
              <Sep cls="ml-[7px] mr-[7px]" />
              <T i={Ic.line} t="直线" gap="gap-[2px]" />
              <T i={Ic.ptlen} t="点加长度" cls="mr-[10px]" gap="gap-[2px]" />
              <T i={Ic.arc} t="三点画弧" cls="mr-[6px]" gap="gap-[2px]" />
              <Arrow />
              <Sel t="" w="w-[55px] ml-[5px] mr-[6px]" />
              <T i={Ic.rect} t="矩形" cls="" gap="gap-[3px]" />
              <Sep cls="ml-[7px] mr-[6px]" />
              <T i={Ic.smart} t="智能布置" cls="mr-[2px]" gap="gap-[3px]" />
              <Arrow />
            </Bar>
            <Bar cls="ml-[2px] w-[30px] pl-[1px]"><Grip /></Bar>
          </div>
          <div className="h-[26px] mt-[2px] flex shrink-0">
            <Bar cls="ml-[647px] w-[423px] pl-[2px]">
              <Grip />
              <T i={Ic.two} t="两点" cls="mr-[8px] ml-[1px]" gap="gap-[3px]" />
              <T i={Ic.para} t="平行" gap="gap-[3px]" />
              <T i={Ic.angle} t="点角" cls="mr-[6px]" gap="gap-[2px]" />
              <Arrow />
              <span className="w-[7px] shrink-0" />
              <T i={Ic.arcAx} t="三点辅轴" cls="mr-[6px]" gap="gap-[4px]" />
              <Arrow />
              <span className="w-[7px] shrink-0" />
              <T i={Ic.brush} t="删除辅轴" cls="mr-[8px]" gap="gap-[3px]" />
              <T i={Ic.dim} t="长度标注" cls="mr-[6px]" gap="gap-[4px]" />
              <Arrow />
            </Bar>
          </div>

          {/* canvas */}
          <div className="relative h-[278px] mt-[1px] shrink-0 bg-black overflow-hidden">
            <Scene />
            <div className="absolute left-[10px] top-[2px] w-[166px] h-[178px] bg-white shadow-[2px_2px_5px_rgba(0,0,0,.55)] flex flex-col">
              <div className="h-[32px] flex items-center pl-[8px] text-[#aaa] shrink-0">钢筋显示控制面板</div>
              <div className="grow mx-px mb-px border-2 border-[#909090] pl-[3px] pt-[2px] flex flex-col">
                {["水平纵筋", "横向钢筋", "显示其它图元", "显示详细公式"].map((t) => (
                  <div key={t} className="h-[12px] flex items-center gap-[3px] whitespace-nowrap"><Check /><span className="-mt-[2px]">{t}</span></div>
                ))}
              </div>
            </div>
          </div>

          {/* snap bar */}
          <div className="h-[25px] mt-[2px] flex gap-[3px] shrink-0">
            <Bar cls="ml-[2px] w-[207px] pl-[1px]">
              <Grip />
              <T i={Ic.ortho} t="正交" cls="mr-[4px]" gap="gap-[4px]" />
              <Box cls="w-[75px] pl-[2px] gap-[4px]">{Ic.snap}<span>对象捕捉</span></Box>
              <T i={Ic.dyn} t="动态输入" cls="ml-[3px]" gap="gap-[4px]" />
            </Bar>
            <Bar cls="w-[263px] pl-[1px]">
              <Grip />
              <T i={Ic.cross} t="交点" cls="ml-[1px] mr-[4px]" gap="gap-[4px]" />
              <Box cls="w-[51px] pl-[2px] gap-[4px]">{Ic.perp}<span>垂点</span></Box>
              <Box cls="w-[51px] pl-[2px] gap-[4px]">{Ic.mid}<span>中点</span></Box>
              <T i={Ic.vertex} t="顶点" cls="ml-[4px] mr-[7px]" gap="gap-[3px]" />
              <T i={Ic.coord} t="坐标" cls="" gap="gap-[4px]" />
            </Bar>
            <Bar cls="w-[408px] pl-[1px]">
              <Grip cls="ml-[1px] mr-[2px]" />
              <Sel t="不偏移" w="w-[58px]" />
              <Sep cls="ml-[6px] mr-[2px]" />
              <span className="text-[#999] mr-[3px]">X=</span>
              <Spin v="0" w="w-[57px]" />
              <span className="text-[#888] ml-[3px] mr-[6px]">mm</span>
              <span className="text-[#666] mr-[3px]">Y=</span>
              <Spin v="0" w="w-[58px]" />
              <span className="text-[#888] ml-[2px]">mm</span>
              <Sep cls="ml-[6px] mr-[3px]" />
              <span className="block w-[11px] h-[11px] border border-[#888] bg-white mr-[8px] shrink-0" />
              <span>旋转</span>
              <span className="w-[4px] shrink-0" />
              <Spin v="0.000" w="w-[68px]" />
              <span className="ml-[3px] text-[#888] self-start mt-[6px] text-[10px]">°</span>
            </Bar>
          </div>

          {/* grid area */}
          <div className="flex mt-[7px] h-[201px] shrink-0">
            <div className="w-[10px] ml-[2px] shrink-0 flex flex-col">
              <S w={10} h={10} vb="0 0 10 10"><rect x=".5" y=".5" width="9" height="9" fill="#ddd" stroke="#555" /><path d="M1 1l8 8M9 1L1 9" stroke="#b03" /></S>
              <div className="grow mt-[2px] bg-[radial-gradient(#bdbdbd_1px,transparent_1px)] bg-[length:4px_4px]" />
            </div>
            <div className="grow min-w-0 flex flex-col pl-[2px]">
              <div className="h-[25px] mr-[3px] bg-[#f9f9f9] flex items-center pl-[2px] shrink-0">
                <S w={12} h={14} vb="0 0 12 14"><rect x="1" y="2" width="2" height="10" fill="#bbb" /><path d="M10 2v10L4 7z" fill="#c8c8c8" /></S>
                <S w={12} h={14} vb="0 0 12 14" cls="ml-[13px]"><path d="M9 2v10L3 7z" fill="#c8c8c8" /></S>
                <S w={12} h={14} vb="0 0 12 14" cls="ml-[12px]"><path d="M3 2v10l6-5z" fill="#2f6fd0" /></S>
                <S w={12} h={14} vb="0 0 12 14" cls="ml-[12px]"><path d="M1 2v10l7-5z" fill="#2f6fd0" /><rect x="9" y="2" width="2" height="10" fill="#1f4f9c" /></S>
                <Sep cls="ml-[7px] mr-[7px]" />
                <S w={12} h={14} vb="0 0 12 14"><path d="M6 2L1 7h3v5h4V7h3z" fill="#cfcfcf" /></S>
                <S w={12} h={14} vb="0 0 12 14" cls="ml-[12px]"><path d="M6 12L1 7h3V2h4v5h3z" fill="#2f6fd0" /></S>
                <Sep cls="ml-[8px] mr-[5px]" />
                <T i={Ic.ins} t="插入" g cls="mr-[6px]" gap="gap-[4px]" />
                <T i={Ic.rem} t="删除" g cls="mr-[9px]" />
                <T i={Ic.scale} t="缩尺配筋" g cls="mr-[7px]" gap="gap-[6px]" />
                <T i={Ic.info} t="钢筋信息" cls="mr-[7px]" gap="gap-[4px]" />
                <T i={Ic.lib} t="钢筋图库" cls="mr-[7px]" />
                <T i={Ic.other} t="其他" cls="mr-[3px]" gap="gap-[4px]" />
                <Arrow />
                <span className="ml-[8px]">关闭</span>
                <Sep cls="mx-[9px]" />
                <span className="-ml-[5px]">单构件钢筋总重(kg)：16.322</span>
              </div>
              <div className="mt-px -ml-[2px] w-[1183px] h-[172px] border border-[#b4b4b4] bg-white flex flex-col overflow-hidden shrink-0">
                <div className="flex grow min-h-0">
                  <div className="w-[1163px] shrink-0 overflow-hidden flex flex-col">
                    <div className={cols + "h-[19px] shrink-0"}>
                      <Head t="" />
                      <Head t="筋号" />
                      <div className="border-r border-b border-[#b9b9b9] flex items-center justify-center pt-[2px] bg-linear-to-b from-[#fbdca0] to-[#f4bf6c] text-[#800080]"><Mx t="直径(mm)" /></div>
                      <Head t="级别" />
                      <Head t="图号" />
                      <Head t="图形" />
                      <Head t="计算公式" />
                      <Head t="公式描述" />
                      <Head t="长度(mm)" />
                      <Head t="根数" />
                      <Head t="搭接" />
                      <Head t="损耗(%)" />
                      <Head t="单重(kg)" />
                      <Head t="总重(kg)" />
                      <Head t="钢筋归类" />
                      <Head t="搭接" cls="pl-[11px] !border-r-0" />
                    </div>
                    <div className="overflow-hidden grow min-h-0">
                      <Row n="1*" first h="h-[61px]" d="8" f={["横向钢筋.1", "0", "175+540+175"]} desc="端头+净长+端头" len="890" cnt="16" a="0.352" b="5.625"
                        shape={
                          <svg viewBox="0 0 202 61" className="block w-full h-full">
                            <path d="M116 48H86V7h30" fill="none" stroke="#000" strokeWidth="2" />
                            <text transform="translate(71 10) rotate(90)" fontSize="11" fontFamily="Liberation Sans" fill="#111">370</text>
                            <text x="98" y="14" fontSize="11" fontFamily="Liberation Sans" fill="#111">85 175</text>
                            <text x="85" y="60" fontSize="10.500" fontFamily="Liberation Sans" fill="#111">85175</text>
                          </svg>
                        } />
                      <Row n="2" h="h-[29px]" d="8" f={["横向钢筋.2", "0", "331+175"]} desc="净长+端头" len="506" cnt="16" a="0.2" b="" shape={<Rebar a="49" />} />
                      <Row n="3" h="h-[29px]" d="8" f={["横向钢筋.3", "0", "335+175"]} desc="净长+端头" len="510" cnt="16" a="0.201" b="3.223" shape={<Rebar a="59" />} />
                      <Row n="4" h="h-[29px]" d="6" f={["水平纵筋.1", "1", "3075+40*d"]} desc="净长+锚固长度" len="3315" cnt="3" a="0.862" b="2.586"
                        shape={<div className="h-full w-full flex justify-center pt-[6px] pr-[1px] text-[#f00]"><Mx t="3315" /></div>} />
                    </div>
                  </div>
                  <div className="w-[17px] shrink-0 bg-[#f7f7f7] flex flex-col">
                    <div className="h-[18px] flex items-center justify-center shrink-0"><S w={9} h={7} vb="0 0 9 7"><path d="M1 6l3.500-4L8 6" fill="none" stroke="#555" strokeWidth="1.500" /></S></div>
                    <div className="h-[32px] bg-[#cdcdcd] shrink-0" />
                    <div className="grow" />
                    <div className="h-[18px] flex items-center justify-center shrink-0"><S w={9} h={7} vb="0 0 9 7"><path d="M1 1l3.500 4L8 1" fill="none" stroke="#555" strokeWidth="1.500" /></S></div>
                  </div>
                </div>
                <div className="h-[16px] flex items-center shrink-0 bg-[#f5f5f5]">
                  <div className="w-[18px] flex justify-center shrink-0"><S w={7} h={9} vb="0 0 7 9"><path d="M6 1L2 4.500 6 8" fill="none" stroke="#444" strokeWidth="1.500" /></S></div>
                  <div className="w-[811px] h-full bg-[#cdcdcd] shrink-0" />
                  <div className="grow" />
                  <div className="w-[22px] mr-[15px] flex justify-center shrink-0"><S w={7} h={9} vb="0 0 7 9"><path d="M1 1l4 3.500L1 8" fill="none" stroke="#555" strokeWidth="1.500" /></S></div>
                </div>
              </div>
            </div>
          </div>
        </div>
      </div>

      {/* status */}
      <div className="h-[20px] flex gap-[3px] shrink-0 text-[#111]">
        {[
          ["X=27469 Y=4195", "w-[148px] pl-[2px]"],
          ["层高:4.5m", "w-[77px] pl-[2px]"],
          ["底标高:-0.05m", "w-[97px] pl-[2px]"],
          ["1(1)", "w-[46px] pl-[2px]"],
          ["", "w-[914px]"],
          ["216.2 FPS", "w-[70px] pl-[2px]"],
        ].map(([t, c], k) => (
          <div key={k} className={"h-full border border-[#ddd] bg-[#f7f7f7] flex items-center shrink-0 whitespace-nowrap " + c}><Mx t={t} /></div>
        ))}
      </div>

      {/* taskbar */}
      <div className="h-[40px] shrink-0 flex items-stretch bg-[#04111a] text-white">
        <div className="w-[48px] bg-black flex items-center justify-center shrink-0"><Win /></div>
        <div className="w-[344px] bg-[#343434] flex items-center shrink-0">
          <span className="block ml-[10px] w-[19px] h-[19px] rounded-full border-[2.5px] border-white" />
          <span className="ml-[7px] text-[14px] text-[#8f8f8f]">在这里输入你要搜索的内容</span>
          <S w={12} h={18} vb="0 0 12 18" cls="ml-auto mr-[15px]"><rect x="3" y="1" width="6" height="11" rx="3" fill="none" stroke="#999" /><path d="M1 8a5 5 0 0 0 10 0M6 13v4M3 17h6" fill="none" stroke="#999" /></S>
        </div>
        <Tk cls="w-[49px]"><svg width="20" height="16" viewBox="0 0 20 16"><rect x="4" y="1" width="12" height="14" fill="none" stroke="#fff" strokeWidth="1.200" /><path d="M2 3H0v10h2M18 3h2v10h-2" fill="none" stroke="#fff" /></svg></Tk>
        <Tk cls="w-[52px]"><svg width="22" height="22" viewBox="0 0 22 22"><path d="M11 11C6 11 2 8 3 4s7-3 8 0c1-4 7-3 8 0s-4 7-8 7zm0 0c5 0 8 4 8 8s-7 3-8 0c-1 3-7 4-8 0s3-8 8-8z" fill="#e4e4e4" /><path d="M11 0v22M0 11h22" stroke="#04111a" strokeWidth="1.200" /></svg></Tk>
        <Tk cls="w-[52px]"><svg width="22" height="28" viewBox="0 0 22 28"><path d="M19 18c-2 5-15 8-16-3C2 6 11 2 18 8c2 2 2 5 2 7H8c0 4 8 4 11 3zM8 11h7c-1-3-6-3-7 0z" fill="#eaeaea" /><path d="M3 20C1 26 9 22 20 8c2-6-2-5-6-3" fill="none" stroke="#ddd" /></svg></Tk>
        <Tk cls="w-[51px]"><svg width="22" height="22" viewBox="0 0 22 22"><path d="M20 5a9 9 0 1 0 1 7c-2 5-9 6-12 3s-3-8 2-9c4-1 7 3 4 6s-5 0-4-2" fill="none" stroke="#aab" strokeWidth="1.500" /></svg></Tk>
        <Tk cls="w-[50px]"><svg width="22" height="24" viewBox="0 0 22 24"><path d="M19 16c-2 6-17 9-18-4C1 3 12-1 19 6c2 2 2 5 2 8H8c0 4 8 5 11 2zM8 10h7c-1-3-6-3-7 0z" fill="#0f78d8" /></svg></Tk>
        <Tk cls="w-[49px]"><svg width="26" height="26" viewBox="0 0 26 26"><path d="M21 17c-2 5-15 7-16-3C5 6 14 2 20 8c2 2 2 4 2 6H10c0 3 8 5 11 3zM10 11h7c-1-3-6-3-7 0z" fill="#2b8ae0" /><path d="M4 21c-3 4 10 0 19-14 2-6-5-5-9-3" fill="none" stroke="#f0c020" strokeWidth="1.500" /></svg></Tk>
        <Tk cls="w-[49px]"><svg width="22" height="20" viewBox="0 0 22 20"><path d="M1 3h8l2 2h10v13H1z" fill="#f8d568" /><rect x="1" y="7" width="20" height="11" fill="#fce9a8" /><rect x="6" y="11" width="10" height="7" fill="#4da6e8" /></svg></Tk>
        <Tk cls="w-[49px]" on="mx-[4px]"><svg width="22" height="26" viewBox="0 0 22 26"><circle cx="11" cy="14" r="10" fill="#7ac943" stroke="#d8f0c0" strokeWidth="2" /><path d="M17 13H6c0-5 10-5 11 0zM6 14c0 5 8 6 11 3" fill="none" stroke="#fff" strokeWidth="2" /></svg></Tk>
        <Tk cls="w-[48px]" on="mx-[4px]"><svg width="24" height="26" viewBox="0 0 24 26"><rect x="1" y="2" width="22" height="22" rx="2" fill="#f5a623" /><rect x="5" y="6" width="14" height="16" fill="#fdf3d8" transform="rotate(-8 12 14)" /><path d="M7 12h9M7 15h9M7 18h7" stroke="#a87" /><path d="M14 14L22 3" stroke="#c8281c" strokeWidth="2" /></svg></Tk>
        <Tk cls="w-[48px] bg-[#3a4145]" on="mx-[0px]"><div className="w-[24px] h-[24px] rounded-[4px] bg-[#0a90ee] flex items-center justify-center"><svg width="18" height="18" viewBox="0 0 18 18"><path d="M9 2v14M3 6c0 4 2 5 6 5s6-1 6-5M4 11c-3 0-3-2-3-3M14 11c3 0 3-2 3-3" fill="none" stroke="#fff" strokeWidth="1.800" /></svg></div></Tk>
        <Tk cls="w-[44px]" on="ml-[4px]"><svg width="26" height="28" viewBox="0 0 26 28"><path d="M22 4c-4-3-19 0-19 13 0 12 16 10 18 4 1-4-2-7-7-6 0 2 2 3 3 3-1 3-8 2-8-3 0-6 6-9 13-11z" fill="#2a98f0" /></svg></Tk>
        <div className="w-[36px] -ml-[1px] flex items-center justify-center text-[#ddd] shrink-0">链接</div>
        <div className="ml-[18px] w-[60px] flex flex-col items-center justify-center gap-[7px] text-[#e8e8e8] shrink-0 whitespace-nowrap"><span>29%</span><span>CPU使用</span></div>
        <S w={12} h={12} vb="0 0 12 12" cls="self-center ml-[13px]"><path d="M1 9l5-6 5 6" fill="none" stroke="#fff" /></S>
        <S w={16} h={14} vb="0 0 16 14" cls="self-center ml-[11px]"><rect x="3" y="5" width="12" height="8" fill="none" stroke="#fff" /><rect x="4" y="6" width="6" height="6" fill="#fff" /><path d="M1 4l2-3M4 4l2-3" stroke="#fff" /></S>
        <S w={16} h={16} cls="self-center ml-[10px]"><path d="M2 14a12 12 0 0 1 12-12M5 14a9 9 0 0 1 9-9M8 14a6 6 0 0 1 6-6" fill="none" stroke="#bbb" /><circle cx="12" cy="13" r="1.500" fill="#ddd" /></S>
        <S w={16} h={16} cls="self-center ml-[6px]"><path d="M1 6h3l4-4v12l-4-4H1z" fill="none" stroke="#fff" /><path d="M10 5a4 4 0 0 1 0 6M12 3a7 7 0 0 1 0 10" fill="none" stroke="#888" /></S>
        <S w={23} h={14} vb="0 0 23 14" cls="self-center ml-[8px]"><rect x=".5" y=".5" width="22" height="13" fill="none" stroke="#fff" /><path d="M3 4h17M3 7h17" stroke="#fff" strokeDasharray="1 1" /><path d="M6 10h11" stroke="#fff" /></S>
        <span className="ml-[9px] self-center text-[14px]">中</span>
        <div className="ml-[15px] self-center"><div className="w-[14px] h-[16px] rounded-[3px] bg-[#ef5a24] flex items-center justify-center text-[12px] font-bold text-white">S</div></div>
        <div className="ml-[12px] w-[70px] flex flex-col items-center justify-center gap-[8px] text-[#e8e8e8] shrink-0 whitespace-nowrap"><span>16:30</span><span>2018/3/8</span></div>
        <div className="ml-[14px] self-center flex items-start">
          <S w={15} h={15} vb="0 0 15 15"><path d="M0 0h15v12H7l-3 3v-3H0z" fill="#fff" /><path d="M3 3h9M3 6h9M3 9h9" stroke="#04111a" /></S>
          <span className="-ml-[3px] mt-[8px] w-[16px] h-[16px] rounded-full bg-[#444] border border-[#ccc] flex items-center justify-center text-[11px] font-bold">1</span>
        </div>
      </div>

      {/* overlays */}
      <div className="absolute left-[1149px] -top-[29px] w-[46px] h-[46px] rounded-full bg-[#3cbc5a] border-2 border-[#d8d8d8] shadow-[0_1px_3px_rgba(0,0,0,.5)] flex items-end justify-center pb-[4px] text-white text-[12px] font-bold">66</div>
      <div className="absolute left-[1160px] top-[606px] flex items-center">
        <div className="w-[26px] h-[26px] rounded-[4px] bg-[#ef5a24] rotate-[-6deg] flex items-center justify-center text-white text-[22px] font-bold shadow-[1px_1px_2px_rgba(0,0,0,.4)] z-10">S</div>
        <div className="-ml-px w-[179px] h-[22px] bg-white border border-[#cfe0f0] flex items-center justify-between pl-[7px] pr-[3px] text-[#1a78c8] font-bold text-[14px]">
          <span>中</span>
          <span className="text-[12px] -mt-[2px]">°,</span>
          <S><circle cx="8" cy="8" r="7" fill="none" stroke="#1a78c8" strokeWidth="1.500" /><circle cx="5.500" cy="6.500" r="1" fill="#1a78c8" /><circle cx="10.500" cy="6.500" r="1" fill="#1a78c8" /><path d="M5 10a3.500 3.500 0 0 0 6 0" fill="none" stroke="#1a78c8" /></S>
          <S><rect x="5.500" y="1" width="5" height="9" rx="2.500" fill="#1a78c8" /><path d="M3 7a5 5 0 0 0 10 0M8 12v3M5 15h6" fill="none" stroke="#1a78c8" /></S>
          <S><rect x="1" y="3" width="14" height="10" rx="1" fill="#1a78c8" /><path d="M3 6h10M3 9h10" stroke="#fff" strokeDasharray="1 1" /></S>
          <S><circle cx="6" cy="5" r="3" fill="#b8c8d4" /><path d="M1 14c0-5 10-5 10 0z" fill="#b8c8d4" /><rect x="9" y="9" width="6" height="5" fill="#b8c8d4" /></S>
          <S><path d="M1 4l4-2h6l4 2-2 3-1-1v8H4V6L3 7z" fill="#1a78c8" /></S>
          <S><path d="M2 14l7-7a4 4 0 0 1 5-5l-2 2 1 2 2-1a4 4 0 0 1-5 4l-6 6z" fill="#1a78c8" /></S>
        </div>
      </div>
    </div>
  );
}
